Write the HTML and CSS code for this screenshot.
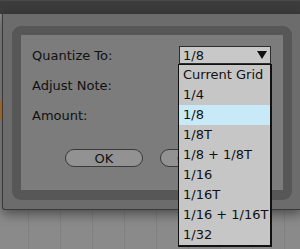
FILE: index.html
```html
<!DOCTYPE html>
<html lang="en">
<head>
    <meta charset="UTF-8">
    <title>Quantize</title>
    <link rel="stylesheet" href="styles.css">
</head>
<body>
    <div class="topbar"></div>
    <div class="canvas">
        <div class="clip"></div>
    </div>

    <div class="dialog">
        <div class="frame">
            <div class="panel">
                <div class="row">
                    <span class="label">Quantize To:</span>
                    <div class="select">
                        <span>1/8</span>
                        <svg class="arrow" width="10" height="8" viewBox="0 0 10 8"><path d="M0 0 L10 0 L5 8 Z" fill="#111"/></svg>
                    </div>
                </div>
                <div class="row">
                    <span class="label">Adjust Note:</span>
                </div>
                <div class="row">
                    <span class="label">Amount:</span>
                </div>
                <div class="buttons">
                    <button class="btn">OK</button>
                    <button class="btn">Cancel</button>
                </div>
            </div>
        </div>
    </div>

    <ul class="menu">
        <li>Current Grid</li>
        <li>1/4</li>
        <li class="active">1/8</li>
        <li>1/8T</li>
        <li>1/8 + 1/8T</li>
        <li>1/16</li>
        <li>1/16T</li>
        <li>1/16 + 1/16T</li>
        <li>1/32</li>
    </ul>
</body>
</html>
```

FILE: styles.css
```css
body {
    margin: 0;
    width: 300px;
    height: 249px;
    overflow: hidden;
    position: relative;
    font-family: "DejaVu Sans", sans-serif;
    font-size: 13px;
    color: #111;
    background-color: #8a8a8a;
}

.topbar {
    height: 14px;
    background-color: #3c3c3c;
    border-top: 1px solid #4a4a4a;
    box-sizing: border-box;
}

.canvas {
    height: 235px;
    background-color: #8a8a8a;
    background-image: repeating-linear-gradient(90deg, transparent 0, transparent 28px, #808080 28px, #808080 29px, transparent 29px, transparent 32px);
    position: relative;
}

.clip {
    position: absolute;
    left: 0;
    top: 86px;
    width: 3px;
    height: 20px;
    background-color: #c07a30;
}

.dialog {
    position: absolute;
    left: 2px;
    top: 14px;
    width: 300px;
    height: 196px;
    box-sizing: border-box;
    padding: 12px 10px 10px 10px;
    background-color: #6c6c6c;
    border-left: 1px solid #3a3a3a;
    border-bottom: 1px solid #3a3a3a;
    border-bottom-left-radius: 3px;
    box-shadow: 0 4px 12px rgba(0, 0, 0, 0.45);
}

.frame {
    width: 280px;
    height: 174px;
    box-sizing: border-box;
    padding: 9px 9px 10px 9px;
    margin-left: -1px;
    background-color: #575757;
    border-radius: 9px;
}

.panel {
    height: 100%;
    box-sizing: border-box;
    padding: 5px 0 0 11px;
    background-color: #7c7c7c;
}

.row {
    display: flex;
    align-items: center;
    height: 30px;
}

.label {
    width: 147px;
}

.select {
    display: flex;
    align-items: center;
    justify-content: space-between;
    width: 92px;
    height: 18px;
    box-sizing: border-box;
    padding: 0 3px 0 3px;
    background-color: #c8c8c8;
    border: 1px solid #2e2e2e;
}

.buttons {
    display: flex;
    gap: 17px;
    margin-top: 19px;
    padding-left: 33px;
}

.btn {
    width: 78px;
    height: 18px;
    padding: 0;
    font-family: "DejaVu Sans", sans-serif;
    font-size: 13px;
    color: #111;
    background-color: #929292;
    border: 1px solid #3a3a3a;
    border-radius: 9px;
}

.menu {
    position: absolute;
    left: 178px;
    top: 64px;
    width: 94px;
    margin: 0;
    padding: 0;
    list-style: none;
    background-color: #c6c6c6;
    border: 1px solid #111;
    border-right-width: 2px;
    border-bottom-width: 2px;
    box-sizing: border-box;
}

.menu li {
    height: 20px;
    line-height: 20px;
    padding-left: 4px;
    white-space: nowrap;
}

.menu li.active {
    background-color: #c8e9f8;
}
```
